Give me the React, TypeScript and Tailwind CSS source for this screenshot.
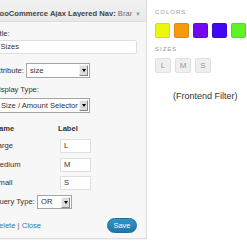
import React from "react";

function Sel({ text, className }: { text: string; className: string }) {
  return (
    <div className={"flex items-center justify-between bg-white border border-[#a5a5a5] pl-[3px] pr-[1px] " + className}>
      <span className="leading-none text-[#333]">{text}</span>
      <div className="w-[9px] h-[11px] bg-[#dcdcdc] border border-t-[#f4f4f4] border-l-[#f4f4f4] border-r-[#888] border-b-[#888] flex items-center justify-center">
        <div className="w-0 h-0 border-l-[2.5px] border-r-[2.5px] border-t-[3px] border-l-transparent border-r-transparent border-t-black" />
      </div>
    </div>
  );
}

export default function App() {
  const colors = ["#ebf80a", "#f59a0a", "#7208f2", "#3f08f0", "#5ff326"];
  return (
    <div className="w-[247px] h-[247px] overflow-hidden bg-white flex text-[7.6px] text-[#333]" style={{ fontFamily: '"Liberation Sans", Arial, sans-serif' }}>
      <div className="ml-[-12px] w-[159px] h-[239px] shrink-0 border border-t-0 border-[#dcdcdc] bg-[#f7f7f7] flex flex-col shadow-[0_1px_1px_rgba(0,0,0,0.04)]">
        <div className="h-[22px] shrink-0 border-b border-[#dcdcdc] bg-gradient-to-b from-[#f2f2f2] to-[#e9e9e9] flex items-center pt-[6px] pl-[3.5px] pr-[5px]">
          <span className="flex-1 overflow-hidden whitespace-nowrap leading-none text-[#464646] text-[7.6px]">
            <b>WooCommerce Ajax Layered Nav:</b> <span className="text-[#6a6a6a]">Brand</span>
          </span>
          <span className="w-[9px] text-[6px] text-[#9a9a9a] leading-none text-right">▼</span>
        </div>
        <div className="flex flex-col pl-[4.5px] pr-[9px]">
          <div className="mt-[7px] h-[10px] leading-[10px]">Title:</div>
          <div className="mt-[1px] h-[14px] bg-white border border-[#dfdfdf] rounded-[2px] flex items-center pl-[6px]">
            <span className="leading-none">Sizes</span>
          </div>
          <div className="mt-[9px] flex items-center gap-[2px]">
            <span className="leading-none w-[30.5px]">Attribute:</span>
            <Sel text="size" className="w-[64px] h-[15px]" />
          </div>
          <div className="mt-[7px] h-[10px] leading-[10px]">Display Type:</div>
          <div className="mt-[3px] flex">
            <Sel text="Size / Amount Selector" className="ml-[3.5px] w-[93px] h-[15px]" />
          </div>
          <div className="mt-[11px] h-[10px] flex items-center font-bold">
            <span className="w-[64.5px] leading-none">Name</span>
            <span className="leading-none">Label</span>
          </div>
          {[
            ["Large", "L", "mt-[5px]"],
            ["Medium", "M", "mt-[5px]"],
            ["Small", "S", "mt-[4px]"],
          ].map(([n, l, m]) => (
            <div key={n} className={m + " flex items-center"}>
              <span className="w-[66.5px] leading-none">{n}</span>
              <div className="w-[31px] h-[14px] bg-white border border-[#dfdfdf] flex items-center pl-[3px]">
                <span className="leading-none">{l}</span>
              </div>
            </div>
          ))}
          <div className="mt-[5px] flex items-center gap-[2px]">
            <span className="leading-none w-[41.5px] whitespace-nowrap">Query Type:</span>
            <Sel text="OR" className="w-[35px] h-[14px]" />
          </div>
          <div className="mt-[9px] flex items-center justify-between">
            <span className="leading-none text-[#2a7ba6]">
              Delete <span className="text-[#666]">|</span> Close
            </span>
            <div className="w-[30px] h-[15px] rounded-full bg-gradient-to-b from-[#3193c6] to-[#1f78a8] border border-[#1d6c97] flex items-center justify-center">
              <span className="text-white leading-none text-[7.5px]">Save</span>
            </div>
          </div>
        </div>
      </div>
      <div className="pl-[8px] flex flex-col">
        <div className="mt-[8px] h-[8px] leading-[8px] text-[6px] tracking-[1px] text-[#999]">COLORS</div>
        <div className="mt-[7px] flex gap-[4px]">
          {colors.map((c) => (
            <div key={c} className="w-[15px] h-[15px] rounded-[2px] border border-black/10" style={{ backgroundColor: c }} />
          ))}
        </div>
        <div className="mt-[7px] h-[8px] leading-[8px] text-[6px] tracking-[1px] text-[#999]">SIZES</div>
        <div className="mt-[5px] flex gap-[4px]">
          {["L", "M", "S"].map((s) => (
            <div key={s} className="w-[16px] h-[15px] rounded-[2px] bg-[#efefef] border border-[#e0e0e0] flex items-center justify-center text-[8px] text-[#999]">
              {s}
            </div>
          ))}
        </div>
        <div className="mt-[17px] ml-[18px] h-[12px] leading-[12px] text-[9px] text-[#333] whitespace-nowrap">(Frontend Filter)</div>
      </div>
    </div>
  );
}
